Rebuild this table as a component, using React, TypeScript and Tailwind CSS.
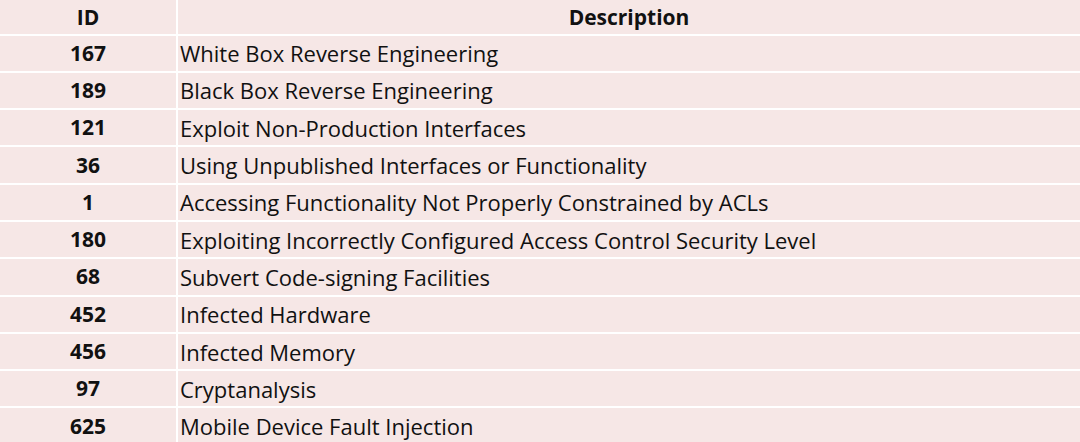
const rows = [
  ["167", "White Box Reverse Engineering"],
  ["189", "Black Box Reverse Engineering"],
  ["121", "Exploit Non-Production Interfaces"],
  ["36", "Using Unpublished Interfaces or Functionality"],
  ["1", "Accessing Functionality Not Properly Constrained by ACLs"],
  ["180", "Exploiting Incorrectly Configured Access Control Security Level"],
  ["68", "Subvert Code-signing Facilities"],
  ["452", "Infected Hardware"],
  ["456", "Infected Memory"],
  ["97", "Cryptanalysis"],
  ["625", "Mobile Device Fault Injection"],
];

export default function App() {
  return (
    <div className="w-[1080px] h-[442px] overflow-hidden bg-white font-['Open_Sans',sans-serif] text-[22px] leading-none text-[#111]">
      {/* HEADER */}
      <div className="flex h-[35.5px] border-b-2 border-white">
        <div className="w-[176px] shrink-0 flex items-center justify-center bg-[#f6e7e6] font-bold text-[21px] pt-[1px]">
          ID
        </div>
        <div className="w-[2px] shrink-0 bg-white"></div>
        <div className="flex-1 flex items-center justify-center bg-[#f6e7e6] font-bold text-[21px] pt-[1px]">
          Description
        </div>
      </div>

      {/* ROWS */}
      {rows.map(([id, desc]) => (
        <div key={id} className="flex h-[37.3px] border-b-2 border-white">
          <div className="w-[176px] shrink-0 flex items-center justify-center bg-[#f6e7e6] font-bold text-[21px]">
            {id}
          </div>
          <div className="w-[2px] shrink-0 bg-white"></div>
          <div className="flex-1 flex items-center pl-[2px] bg-[#f6e7e6] whitespace-nowrap">
            {desc}
          </div>
        </div>
      ))}
    </div>
  );
}
